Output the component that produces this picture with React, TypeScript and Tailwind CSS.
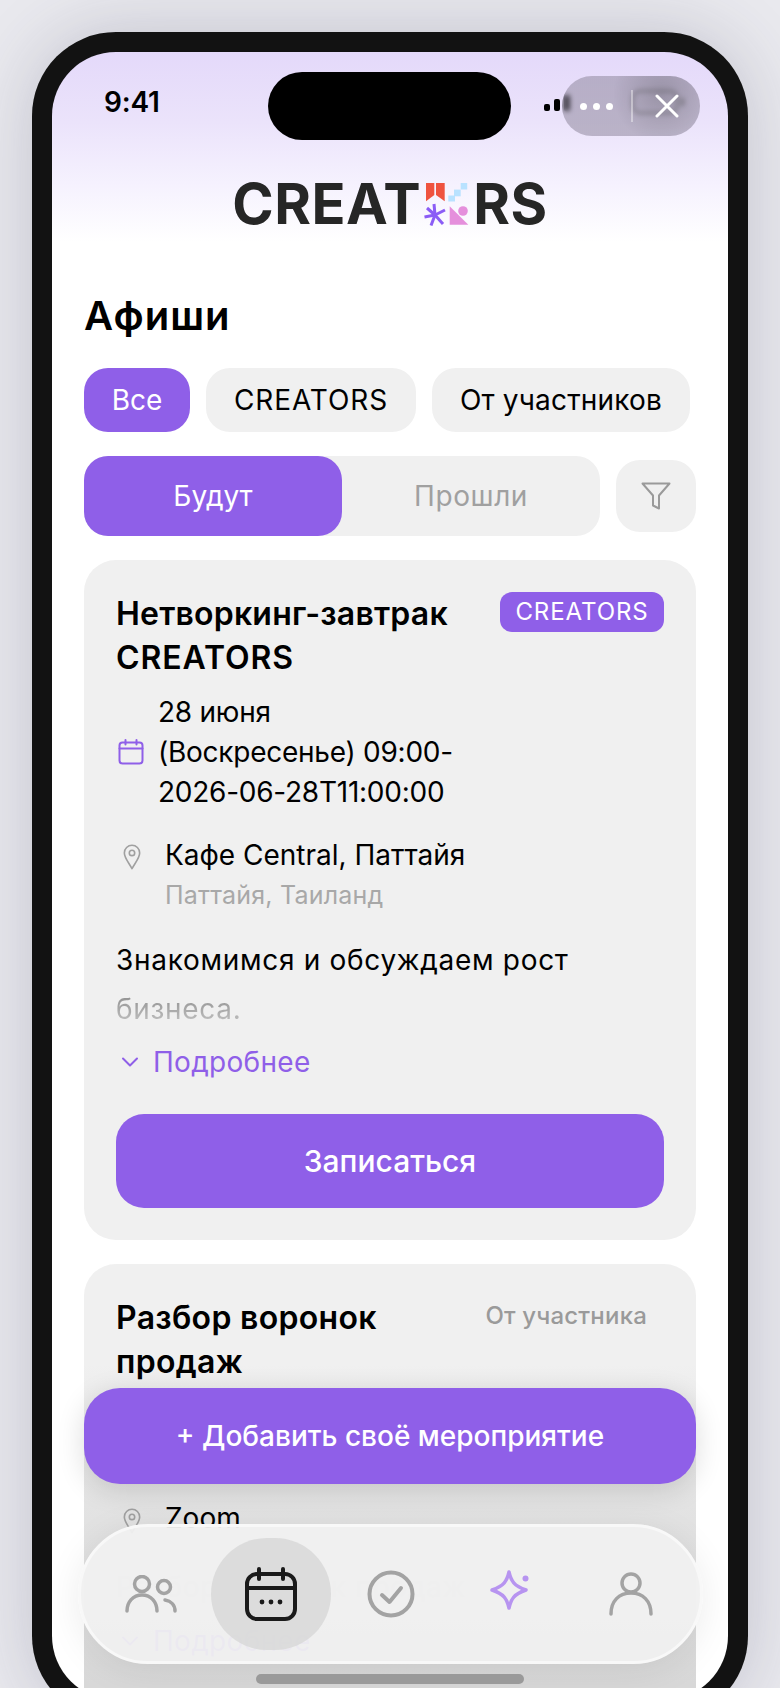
import React from "react";

function PinIcon({ className }: { className?: string }) {
  return (
    <svg className={className} viewBox="0 0 20 28" fill="none" stroke="#a0a0a0" strokeWidth="1.8">
      <path d="M10 27 C7 21 1.5 15 1.5 9.5 A8.5 8.5 0 0 1 18.5 9.5 C18.5 15 13 21 10 27 Z" strokeLinejoin="round" />
      <circle cx="10" cy="9.5" r="3" />
    </svg>
  );
}

function Chevron() {
  return (
    <svg className="w-[18px] h-[12px] shrink-0" viewBox="0 0 18 12" fill="none" stroke="#8f5fe8" strokeWidth="2" strokeLinecap="round" strokeLinejoin="round">
      <path d="M2 2.5 L9 9.5 L16 2.5" />
    </svg>
  );
}

function LogoMark() {
  return (
    <svg className="w-[46px] h-[44px] shrink-0 mx-[3px]" viewBox="0 0 46 44">
      <path d="M2 1H10.3V13L2 19.3Z" fill="#ef533f" />
      <path d="M12 1H20.7V19.3L12 13Z" fill="#ef533f" />
      <rect x="36.7" y="1" width="6.5" height="6.5" fill="#b9e2ff" />
      <rect x="30" y="7.6" width="6.7" height="6.7" fill="#b9e2ff" />
      <rect x="24.3" y="13.5" width="6.7" height="6" fill="#b9e2ff" />
      <g stroke="#8b5cf6" strokeWidth="3" strokeLinecap="butt">
        <path d="M11 33 L10 22" />
        <path d="M11 33 L21 28" />
        <path d="M11 33 L19 42" />
        <path d="M11 33 L7 43.5" />
        <path d="M11 33 L0.5 35" />
        <path d="M11 33 L3 26" />
      </g>
      <path d="M25.7 24.3 L44.3 42.7 H25.7Z" fill="#e58fdc" />
      <circle cx="39" cy="29" r="4.8" fill="#e58fdc" />
    </svg>
  );
}

function NavItem({ active, children }: { active?: boolean; children: React.ReactNode }) {
  return (
    <div className={`h-[112px] rounded-full flex items-center justify-center ${active ? "bg-[#d9d9d9]/90" : ""}`}>
      {children}
    </div>
  );
}

export default function App() {
  return (
    <div className="h-[1688px] w-[780px] overflow-hidden bg-[#e9e9ee] pl-[32px] pt-[32px] font-['Inter','Noto_Sans',sans-serif]">
      <div className="w-[716px] h-[1688px] p-[20px] rounded-[84px] bg-[#121212] shadow-[0_0_70px_rgba(60,60,90,0.22)]">
        <div className="relative w-[676px] h-[1648px] rounded-[64px] overflow-hidden bg-white bg-[linear-gradient(180deg,#e4d9fa_0px,#ebe3fb_70px,#f5f1fe_130px,#ffffff_190px)]">
          {/* Status bar */}
          <div className="flex items-center justify-between pt-[32px] pl-[52px] pr-[44px]">
            <div className="text-[28px] leading-[36px] font-semibold text-black tracking-[-0.2px]">9:41</div>
            <div className="flex items-center gap-[12px] h-[36px]">
              <svg className="w-[44px] h-[24px]" viewBox="0 0 44 24" fill="#000">
                <rect x="0" y="14" width="6" height="7" rx="2" />
                <rect x="10" y="9" width="6" height="12" rx="2" />
                <rect x="20" y="5" width="6" height="16" rx="2" />
              </svg>
              <div className="w-[20px]" />
              <div className="w-[46px] h-[24px] rounded-[8px] border-2 border-[#777]" />
              <div className="w-[3px] h-[8px] bg-[#777] -ml-[9px]" />
            </div>
          </div>

          {/* Logo */}
          <div className="mt-[56px] h-[56px] flex items-center justify-center text-[56px] leading-[56px] font-bold text-[#262626] tracking-[0.5px]">
            <span>CREAT</span>
            <LogoMark />
            <span>RS</span>
          </div>

          <div className="px-[32px]">
            <h1 className="mt-[60px] text-[40px] leading-[48px] font-semibold text-black tracking-[1px]">Афиши</h1>

            <div className="mt-[28px] flex gap-[16px] text-[28px]">
              <div className="h-[64px] w-[106px] rounded-[24px] bg-[#8f5fe8] text-white flex items-center justify-center">Все</div>
              <div className="h-[64px] w-[210px] rounded-[24px] bg-[#f0f0f0] text-black tracking-[0.9px] flex items-center justify-center">CREATORS</div>
              <div className="h-[64px] w-[258px] rounded-[24px] bg-[#f0f0f0] text-black tracking-[0.2px] flex items-center justify-center">От участников</div>
            </div>

            <div className="mt-[24px] flex items-center gap-[16px]">
              <div className="flex w-[516px] h-[80px] rounded-[24px] bg-[#f0f0f0] text-[28px]">
                <div className="w-[258px] rounded-[24px] bg-[#8f5fe8] text-white flex items-center justify-center">Будут</div>
                <div className="w-[258px] text-[#a0a0a0] tracking-[0.6px] flex items-center justify-center">Прошли</div>
              </div>
              <div className="w-[80px] h-[72px] rounded-[24px] bg-[#f0f0f0] flex items-center justify-center">
                <svg className="w-[30px] h-[28px]" viewBox="0 0 30 28" fill="none" stroke="#9a9a9a" strokeWidth="2" strokeLinejoin="round">
                  <path d="M1.5 1.5 H28.5 L18 13.5 V26.5 L12 23.5 V13.5 Z" />
                </svg>
              </div>
            </div>

            {/* Card 1 */}
            <div className="mt-[24px] rounded-[32px] bg-[#f0f0f0] p-[32px]">
              <div className="flex justify-between items-start">
                <div className="text-[32px] leading-[44px] font-semibold text-black tracking-[0.2px]">
                  Нетворкинг-завтрак
                  <br />
                  <span className="tracking-[0.9px]">CREATORS</span>
                </div>
                <div className="h-[40px] w-[164px] rounded-[12px] bg-[#8f5fe8] text-white text-[24px] tracking-[0.9px] flex items-center justify-center">CREATORS</div>
              </div>

              <div className="mt-[12px] flex items-center gap-[14px] pl-[2px]">
                <svg className="w-[26px] h-[26px] shrink-0" viewBox="0 0 26 26" fill="none" stroke="#8f5fe8" strokeWidth="2" strokeLinecap="round">
                  <rect x="1.5" y="3.5" width="23" height="21" rx="3" />
                  <path d="M1.5 9.5 H24.5 M7.5 1 V5.5 M18.5 1 V5.5" />
                </svg>
                <div className="text-[28px] leading-[40px] text-black tracking-[-0.25px]">
                  28 июня
                  <br />
                  (Воскресенье) 09:00-
                  <br />
                  2026-06-28T11:00:00
                </div>
              </div>

              <div className="mt-[23px] flex gap-[24px] pl-[7px]">
                <PinIcon className="w-[18px] h-[28px] mt-[8px] shrink-0" />
                <div>
                  <div className="text-[28px] leading-[40px] text-black">Кафе Central, Паттайя</div>
                  <div className="mt-[4px] text-[25px] leading-[32px] text-[#a8a8a8] tracking-[0.2px]">Паттайя, Таиланд</div>
                </div>
              </div>

              <div className="mt-[25px] text-[28px] leading-[49px] tracking-[0.7px]">
                <div className="text-black">Знакомимся и обсуждаем рост</div>
                <div className="bg-gradient-to-b from-[#808080] to-[#d4d4d4] bg-clip-text text-transparent">бизнеса.</div>
              </div>

              <div className="mt-[8px] flex items-center gap-[14px] pl-[5px] text-[28px] leading-[40px] text-[#8f5fe8] tracking-[0.3px]">
                <Chevron />
                <span>Подробнее</span>
              </div>

              <div className="mt-[32px] h-[94px] rounded-[28px] bg-[#8f5fe8] text-white text-[30px] font-medium flex items-center justify-center">Записаться</div>
            </div>

            {/* Card 2 */}
            <div className="mt-[24px] h-[460px] rounded-[32px] px-[32px] pt-[32px] bg-[linear-gradient(180deg,#f0f0f0_100px,#e3e3e3_240px,#d8d8d8_420px)]">
              <div className="flex justify-between items-start">
                <div className="text-[32px] leading-[44px] font-semibold text-black tracking-[0.3px]">
                  Разбор воронок
                  <br />
                  продаж
                </div>
                <div className="h-[40px] pr-[17px] text-[#9a9a9a] text-[24px] font-medium tracking-[0.2px] flex items-center justify-end">От участника</div>
              </div>

              <div className="mt-[114px] flex gap-[24px] pl-[7px]">
                <PinIcon className="w-[18px] h-[28px] mt-[9px] shrink-0" />
                <div className="text-[28px] leading-[40px] text-black">Zoom</div>
              </div>

              <div className="mt-[25px] text-[28px] leading-[48px] text-[#cfcfcf] tracking-[0.7px]">Разбор воронок продаж</div>

              <div className="mt-[10px] flex items-center gap-[14px] pl-[5px] text-[28px] leading-[40px] text-[#8f5fe8] tracking-[0.3px]">
                <Chevron />
                <span>Подробнее</span>
              </div>
            </div>
          </div>

          {/* Mini-app capsule over the status bar */}
          <div className="absolute left-[510px] top-[24px] w-[138px] h-[60px] rounded-full bg-[radial-gradient(circle_at_72%_30%,rgba(105,100,115,0.62),rgba(135,128,148,0.5)_45%)] backdrop-blur-[2.5px] flex items-center">
            <div className="w-[69px] flex items-center justify-center gap-[6px]">
              <span className="w-[7px] h-[7px] rounded-full bg-white" />
              <span className="w-[7px] h-[7px] rounded-full bg-white" />
              <span className="w-[7px] h-[7px] rounded-full bg-white" />
            </div>
            <div className="w-[2px] h-[32px] bg-white/40" />
            <div className="flex-1 flex items-center justify-center">
              <svg className="w-[26px] h-[24px]" viewBox="0 0 26 24" fill="none" stroke="#fff" strokeWidth="3" strokeLinecap="round">
                <path d="M3 2 L23 22 M23 2 L3 22" />
              </svg>
            </div>
          </div>

          {/* Dynamic island */}
          <div className="absolute left-[216px] top-[20px] w-[243px] h-[68px] rounded-[34px] bg-black" />

          {/* Floating action */}
          <div className="absolute left-[32px] top-[1336px] w-[612px] h-[96px] rounded-[36px] bg-[#8f5fe8] text-white text-[28px] font-medium flex items-center justify-center shadow-[0_6px_28px_rgba(0,0,0,0.14)]">
            + Добавить своё мероприятие
          </div>

          {/* Bottom navigation */}
          <div className="absolute left-[26px] top-[1472px] w-[625px] h-[140px] rounded-full border-[3px] border-[#f8f8f8] bg-[#f0f0f0]/[0.95] shadow-[0_6px_36px_rgba(0,0,0,0.08)] flex items-center justify-center">
            <div className="grid grid-cols-5 w-[600px]">
              <NavItem>
                <svg className="w-[52px] h-[38px]" viewBox="0 0 52 38" fill="none" stroke="#a3a3a3" strokeWidth="3.5" strokeLinecap="round">
                  <circle cx="17" cy="9" r="7.5" />
                  <path d="M2 36 C2 27 8 20 17 20 C26 20 32 27 32 36" />
                  <circle cx="39" cy="12" r="6.5" />
                  <path d="M40 25 C46 26 50 30 50 36" />
                </svg>
              </NavItem>
              <NavItem active>
                <svg className="w-[54px] h-[54px]" viewBox="0 0 54 54" fill="none" stroke="#1a1a1a" strokeWidth="4" strokeLinecap="round">
                  <rect x="3" y="7" width="48" height="45" rx="10" />
                  <path d="M3 21 H51" />
                  <path d="M15 2 V12 M39 2 V12" />
                  <circle cx="18" cy="35" r="2.4" fill="#1a1a1a" stroke="none" />
                  <circle cx="27" cy="35" r="2.4" fill="#1a1a1a" stroke="none" />
                  <circle cx="36" cy="35" r="2.4" fill="#1a1a1a" stroke="none" />
                </svg>
              </NavItem>
              <NavItem>
                <svg className="w-[48px] h-[48px]" viewBox="0 0 48 48" fill="none" stroke="#a3a3a3" strokeWidth="4" strokeLinecap="round" strokeLinejoin="round">
                  <circle cx="24" cy="24" r="21.5" />
                  <path d="M15 25 L22.5 32 L34 18" />
                </svg>
              </NavItem>
              <NavItem>
                <svg className="w-[42px] h-[42px] -mt-[8px]" viewBox="0 0 42 42" fill="none" stroke="#b794f0" strokeWidth="3.5" strokeLinejoin="round">
                  <path d="M19 3 C21 12 24 17 36 21 C24 25 21 30 19 39 C17 30 14 25 2 21 C14 17 17 12 19 3 Z" />
                  <circle cx="35.5" cy="9.5" r="3" fill="#b794f0" stroke="none" />
                </svg>
              </NavItem>
              <NavItem>
                <svg className="w-[44px] h-[44px]" viewBox="0 0 44 44" fill="none" stroke="#a3a3a3" strokeWidth="3.5" strokeLinecap="round">
                  <circle cx="22" cy="11" r="9" />
                  <path d="M2 42 C2 29 10 21 22 21 C34 21 42 29 42 42" />
                </svg>
              </NavItem>
            </div>
          </div>

          {/* Home indicator */}
          <div className="absolute left-[204px] top-[1622px] w-[268px] h-[10px] rounded-full bg-[#9a9a9a]" />
        </div>
      </div>
    </div>
  );
}
